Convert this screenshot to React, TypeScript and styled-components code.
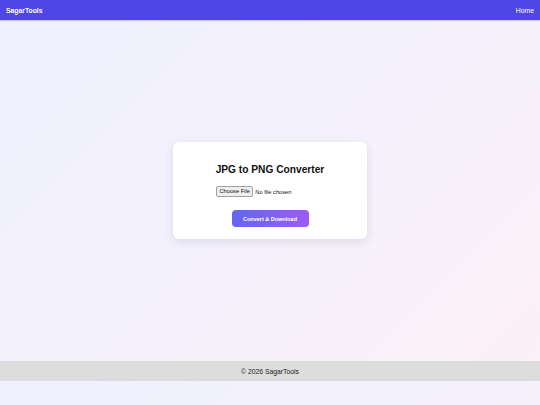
import styled, { createGlobalStyle } from "styled-components";

const GlobalStyle = createGlobalStyle`
  body {
    margin: 0;
    background: linear-gradient(135deg, #eff1ff 0%, #f4f1fc 50%, #fdf0f7 100%);
    font-family: "Liberation Sans", Arial, sans-serif;
    color: #111;
  }
`;

const Header = styled.header`
  height: 20px;
  background: #4f46e5;
  color: #fff;
  display: flex;
  align-items: center;
  justify-content: space-between;
  padding: 0 6px;
  font-size: 6.8px;
  box-shadow: 0 1px 1px rgba(79, 70, 229, 0.25);
`;

const Logo = styled.div`
  font-weight: bold;
`;

const NavLink = styled.a`
  color: #fff;
  text-decoration: none;
`;

const Main = styled.main`
  height: 341px;
  display: flex;
  align-items: center;
  justify-content: center;
`;

const Card = styled.div`
  width: 194px;
  height: 97px;
  box-sizing: border-box;
  background: #fff;
  border-radius: 6px;
  box-shadow: 0 3px 10px rgba(60, 50, 120, 0.12);
  display: flex;
  flex-direction: column;
  align-items: center;
  padding-top: 22px;
`;

const Title = styled.h1`
  margin: 0;
  font-size: 10.2px;
  font-weight: bold;
`;

const FilePicker = styled.label`
  margin-top: 11px;
  width: 108px;
  display: flex;
  align-items: center;
  gap: 2px;
  font-size: 5.7px;
  color: #111;
  cursor: pointer;
`;

const HiddenInput = styled.input`
  display: none;
`;

const PickerButton = styled.span`
  padding: 1px 2.5px;
  border: 1px solid #a0a0a0;
  border-radius: 2px;
  background: #efefef;
  line-height: 7px;
`;

const ConvertButton = styled.button`
  margin-top: 13px;
  width: 77px;
  height: 17px;
  border: none;
  border-radius: 4px;
  background: linear-gradient(90deg, #6366f1, #9b5cf6);
  color: #fff;
  font-family: "Liberation Sans", Arial, sans-serif;
  font-size: 5.5px;
  font-weight: bold;
  cursor: pointer;
`;

const Footer = styled.footer`
  height: 20px;
  background: #dddddd;
  display: flex;
  align-items: center;
  justify-content: center;
  font-size: 6.8px;
  color: #222;
`;

export default function App() {
  return (
    <>
      <GlobalStyle />
      <Header>
        <Logo>SagarTools</Logo>
        <NavLink href="#">Home</NavLink>
      </Header>
      <Main>
        <Card>
          <Title>JPG to PNG Converter</Title>
          <FilePicker>
            <HiddenInput type="file" accept="image/jpeg" />
            <PickerButton>Choose File</PickerButton>
            <span>No file chosen</span>
          </FilePicker>
          <ConvertButton>Convert &amp; Download</ConvertButton>
        </Card>
      </Main>
      <Footer>© 2026 SagarTools</Footer>
    </>
  );
}
